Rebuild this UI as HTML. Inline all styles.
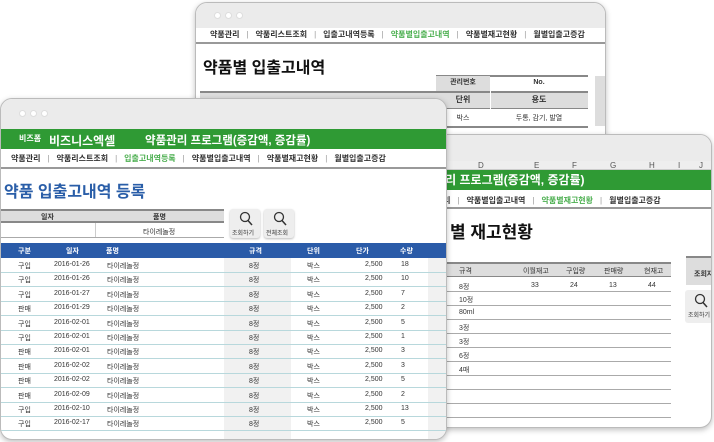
<!DOCTYPE html>
<html><head><meta charset="utf-8">
<style>
*{margin:0;padding:0;box-sizing:border-box}
body{width:714px;height:442px;background:#fff;position:relative;overflow:hidden;font-family:"Liberation Sans","Noto Sans CJK KR",sans-serif;color:#333}
.a{position:absolute}
.win{position:absolute;background:#fff;border:1px solid #bbb;border-radius:12px;overflow:hidden;box-shadow:0 2px 6px rgba(0,0,0,.25)}
.bar{position:absolute;left:0;right:0;top:0;background:#ebebeb}
.dots{position:absolute;display:flex;gap:4px}
.dots i{width:7px;height:7px;border-radius:50%;background:#fff;border:1px solid #ddd;display:block}
.nav{position:absolute;font-size:8px;font-weight:bold;color:#333;white-space:nowrap}
.nav span.s{color:#999;font-weight:normal;margin:0 7px}
.nav .g{color:#4caf50}
.t{position:absolute;font-size:7px;white-space:nowrap}
</style></head><body>

<!-- back window -->
<div class="win" style="left:195px;top:2px;width:411px;height:300px">
 <div class="bar" style="height:25px"></div>
 <div class="dots" style="left:18px;top:9px"><i></i><i></i><i></i></div>
 <div class="nav" style="left:14px;top:26px">약품관리<span class="s">|</span>약품리스트조회<span class="s">|</span>입출고내역등록<span class="s">|</span><span class="g">약품별입출고내역</span><span class="s">|</span>약품별재고현황<span class="s">|</span>월별입출고증감</div>
 <div class="a" style="left:0;right:0;top:39px;border-top:2px solid #999"></div>
 <div class="a" style="left:7px;top:51px;font-size:16px;font-weight:bold;color:#111">약품별 입출고내역</div>
 <div class="a" style="left:240px;top:72px;width:152px;height:15px;border-top:2px solid #888;background:#fff"></div>
 <div class="a" style="left:240px;top:73px;width:54px;height:15px;background:#ddd;font-size:7px;font-weight:bold;text-align:center;line-height:14px">관리번호</div>
 <div class="a" style="left:294px;top:73px;width:98px;height:15px;font-size:7px;font-weight:bold;text-align:center;line-height:14px">No.</div>
 <div class="a" style="left:4px;top:88px;width:388px;height:18px;background:#ddd;border-top:2px solid #888;border-bottom:1px solid #888"></div>
 <div class="a" style="left:294px;top:88px;width:1px;height:18px;background:#fff"></div>
 <div class="a" style="left:240px;top:91px;width:54px;font-size:8px;font-weight:bold;text-align:center">단위</div>
 <div class="a" style="left:294px;top:91px;width:98px;font-size:8px;font-weight:bold;text-align:center">용도</div>
 <div class="a" style="left:240px;top:110px;width:54px;font-size:7px;text-align:center">박스</div>
 <div class="a" style="left:294px;top:110px;width:98px;font-size:7px;text-align:center">두통, 감기, 발열</div>
 <div class="a" style="left:240px;top:123px;width:152px;border-top:2px solid #888"></div>
 <div class="a" style="left:399px;top:73px;width:12px;height:50px;background:#ddd"></div>
</div>

<!-- right window -->
<div class="win" style="left:380px;top:134px;width:332px;height:294px">
 <div class="bar" style="height:26px"></div>
 <div class="a" style="left:0;right:0;top:26px;height:9px;background:#eee;border-bottom:1px solid #ccc;font-size:8px;color:#555">
  <span class="t" style="left:97px;top:0;font-size:8px">D</span><span class="t" style="left:153px;top:0;font-size:8px">E</span><span class="t" style="left:191px;top:0;font-size:8px">F</span><span class="t" style="left:229px;top:0;font-size:8px">G</span><span class="t" style="left:268px;top:0;font-size:8px">H</span><span class="t" style="left:297px;top:0;font-size:8px">I</span><span class="t" style="left:318px;top:0;font-size:8px">J</span>
 </div>
 <div class="a" style="left:0;right:0;top:35px;height:20px;background:#2f9a34;color:#fff;font-size:12px;font-weight:bold;line-height:20px;padding-left:31px">약품관리 프로그램(증감액, 증감률)</div>
 <div class="nav" style="left:40px;top:60px">약품관리<span class="s">|</span>약품별입출고내역<span class="s">|</span><span class="g">약품별재고현황</span><span class="s">|</span>월별입출고증감</div>
 <div class="a" style="left:0;right:0;top:72px;border-top:2px solid #999"></div>
 <div class="a" style="left:69px;top:83px;font-size:17px;font-weight:bold;color:#111">별 재고현황</div>
 <div class="a" style="left:66px;top:127px;width:224px;height:15px;background:#ddd;border-top:2px solid #888;border-bottom:1px solid #888"></div>
 <span class="t" style="left:78px;top:131px">규격</span><span class="t" style="left:142px;top:131px">이월재고</span><span class="t" style="left:185px;top:131px">구입량</span><span class="t" style="left:223px;top:131px">판매량</span><span class="t" style="left:263px;top:131px">현재고</span>
 <span class="t" style="left:78px;top:147px">8정</span><span class="t" style="left:150px;top:147px">33</span><span class="t" style="left:189px;top:147px">24</span><span class="t" style="left:228px;top:147px">13</span><span class="t" style="left:267px;top:147px">44</span>
 <div class="a" style="left:66px;top:156px;width:224px;border-top:1px solid #aaa"></div>
 <span class="t" style="left:78px;top:160px">10정</span><div class="a" style="left:66px;top:170px;width:224px;border-top:1px solid #aaa"></div>
 <span class="t" style="left:78px;top:174px">80ml</span><div class="a" style="left:66px;top:184px;width:224px;border-top:1px solid #aaa"></div>
 <span class="t" style="left:78px;top:188px">3정</span><div class="a" style="left:66px;top:198px;width:224px;border-top:1px solid #aaa"></div>
 <span class="t" style="left:78px;top:202px">3정</span><div class="a" style="left:66px;top:212px;width:224px;border-top:1px solid #aaa"></div>
 <span class="t" style="left:78px;top:216px">6정</span><div class="a" style="left:66px;top:226px;width:224px;border-top:1px solid #aaa"></div>
 <span class="t" style="left:78px;top:230px">4매</span><div class="a" style="left:66px;top:240px;width:224px;border-top:1px solid #aaa"></div>
 <div class="a" style="left:66px;top:254px;width:224px;border-top:1px solid #aaa"></div>
 <div class="a" style="left:66px;top:268px;width:224px;border-top:1px solid #aaa"></div>
 <div class="a" style="left:66px;top:282px;width:224px;border-top:1px solid #aaa"></div>
 <div class="a" style="left:305px;top:121px;width:30px;height:29px;background:#ddd;border-top:2px solid #888;font-size:7px;font-weight:bold;padding:11px 0 0 8px">조회자</div>
 <div class="a" style="left:304px;top:155px;width:30px;height:33px;background:#eee;border-radius:3px;font-size:6px;padding:20px 0 0 3px">조회하기</div>
 <svg class="a" style="left:313px;top:158px" width="14" height="16"><circle cx="6" cy="6" r="4.5" fill="none" stroke="#333" stroke-width="1.3"/><path d="M9 9.5 L13 14" stroke="#333" stroke-width="1.5"/></svg>
</div>

<!-- front window -->
<div class="win" style="left:0;top:98px;width:447px;height:342px">
 <div class="bar" style="height:30px"></div>
 <div class="dots" style="left:18px;top:11px"><i></i><i></i><i></i></div>
 <div class="a" style="left:0;right:0;top:30px;height:20px;background:#2f9a34;color:#fff;font-weight:bold">
  <span class="a" style="left:18px;top:4px;font-size:8px">비즈폼</span>
  <span class="a" style="left:48px;top:3px;font-size:12px">비즈니스엑셀</span>
  <span class="a" style="left:144px;top:3px;font-size:11.5px">약품관리 프로그램(증감액, 증감률)</span>
 </div>
 <div class="nav" style="left:10px;top:54px">약품관리<span class="s">|</span>약품리스트조회<span class="s">|</span><span class="g">입출고내역등록</span><span class="s">|</span>약품별입출고내역<span class="s">|</span>약품별재고현황<span class="s">|</span>월별입출고증감</div>
 <div class="a" style="left:0;right:0;top:68px;border-top:2px solid #999"></div>
 <div class="a" style="left:3px;top:79px;font-size:16px;font-weight:bold;color:#2a5ea8">약품 입출고내역 등록</div>
 <div class="a" style="left:0;top:110px;width:223px;height:14px;background:#ddd;border-top:2px solid #888;border-bottom:2px solid #888"></div>
 <span class="t" style="left:40px;top:113px;font-weight:bold">일자</span><span class="t" style="left:152px;top:113px;font-weight:bold">품명</span>
 <div class="a" style="left:94px;top:124px;width:1px;height:14px;background:#ccc"></div>
 <span class="t" style="left:142px;top:128px">타이레놀정</span>
 <div class="a" style="left:0;top:138px;width:223px;border-top:1px solid #aaa"></div>
 <div class="a" style="left:229px;top:110px;width:30px;height:29px;background:#eee;border-radius:3px;box-shadow:0 1px 2px #bbb"></div>
 <div class="a" style="left:263px;top:110px;width:30px;height:29px;background:#eee;border-radius:3px;box-shadow:0 1px 2px #bbb"></div>
 <svg class="a" style="left:238px;top:112px" width="14" height="16"><circle cx="6" cy="6" r="4.5" fill="none" stroke="#333" stroke-width="1.3"/><path d="M9 9.5 L13 14" stroke="#333" stroke-width="1.5"/></svg>
 <svg class="a" style="left:272px;top:112px" width="14" height="16"><circle cx="6" cy="6" r="4.5" fill="none" stroke="#333" stroke-width="1.3"/><path d="M9 9.5 L13 14" stroke="#333" stroke-width="1.5"/></svg>
 <span class="t" style="left:231px;top:129px;font-size:6px">조회하기</span><span class="t" style="left:265px;top:129px;font-size:6px">전체조회</span>
 <div class="a" style="left:0;top:144px;width:447px;height:15px;background:#2a5ba8;color:#fff;font-size:7px;font-weight:bold">
  <span class="a" style="left:17px;top:3px">구분</span><span class="a" style="left:65px;top:3px">일자</span><span class="a" style="left:105px;top:3px">품명</span><span class="a" style="left:248px;top:3px">규격</span><span class="a" style="left:306px;top:3px">단위</span><span class="a" style="left:355px;top:3px">단가</span><span class="a" style="left:399px;top:3px">수량</span>
 </div>
 <div class="a" style="left:223px;top:159px;width:160px;height:183px;background:#f1f1f1"></div>
 <div class="a" style="left:290px;top:159px;width:93px;height:183px;background:#fff"></div>
 <div class="a" style="left:427px;top:159px;width:20px;height:183px;background:#f1f1f1"></div>
 <div id="rows"></div>
</div>
<script>
var d=[["구입","2016-01-26",18],["구입","2016-01-26",10],["구입","2016-01-27",7],["판매","2016-01-29",2],["구입","2016-02-01",5],["구입","2016-02-01",1],["판매","2016-02-01",3],["판매","2016-02-02",3],["판매","2016-02-02",5],["판매","2016-02-09",2],["구입","2016-02-10",13],["구입","2016-02-17",5]];
var h="";d.forEach(function(r,i){var y=159+i*14.4;
h+='<span class="t" style="left:17px;top:'+(y+3)+'px">'+r[0]+'</span><span class="t" style="left:53px;top:'+(y+3)+'px">'+r[1]+'</span><span class="t" style="left:106px;top:'+(y+3)+'px">타이레놀정</span><span class="t" style="left:248px;top:'+(y+3)+'px">8정</span><span class="t" style="left:306px;top:'+(y+3)+'px">박스</span><span class="t" style="left:364px;top:'+(y+3)+'px">2,500</span><span class="t" style="left:400px;top:'+(y+3)+'px">'+r[2]+'</span><div class="a" style="left:0;width:447px;top:'+(y+14)+'px;border-top:1px solid #b8d8dc"></div>';});
document.getElementById("rows").outerHTML=h;
</script>
</body></html>
